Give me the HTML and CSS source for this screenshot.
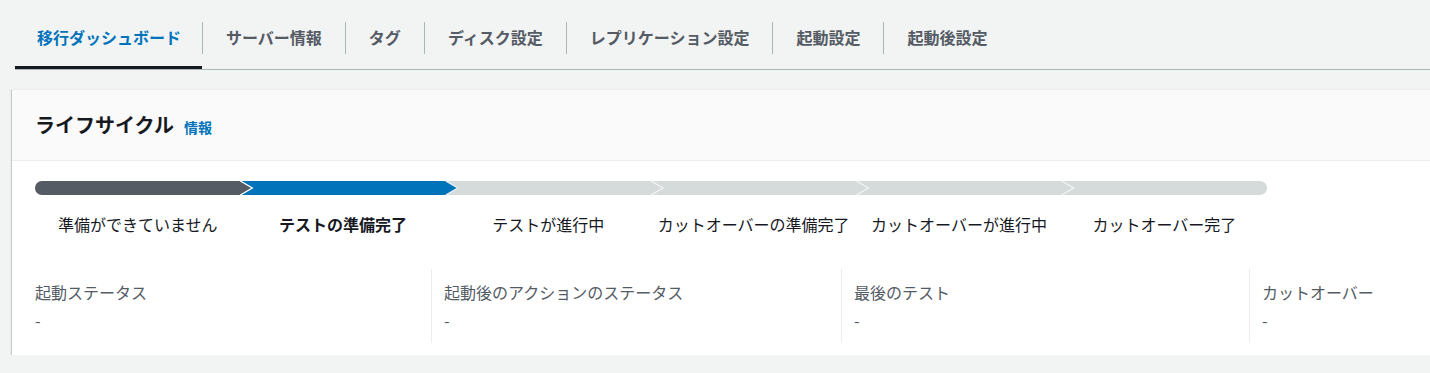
FILE: index.html
```html
<!DOCTYPE html>
<html lang="ja">
<head>
    <meta charset="UTF-8">
    <title>移行ダッシュボード</title>
    <link rel="stylesheet" href="styles.css">
</head>
<body>
    <div class="page">
        <nav class="tabs">
            <a class="tab active">移行ダッシュボード</a>
            <span class="tab-sep"></span>
            <a class="tab">サーバー情報</a>
            <span class="tab-sep"></span>
            <a class="tab">タグ</a>
            <span class="tab-sep"></span>
            <a class="tab">ディスク設定</a>
            <span class="tab-sep"></span>
            <a class="tab">レプリケーション設定</a>
            <span class="tab-sep"></span>
            <a class="tab">起動設定</a>
            <span class="tab-sep"></span>
            <a class="tab">起動後設定</a>
        </nav>

        <section class="card">
            <header class="card-header">
                <h2>ライフサイクル</h2>
                <a class="info-link">情報</a>
            </header>
            <div class="card-body">
                <div class="lifecycle">
                    <svg class="lifecycle-bar" width="1232" height="14" viewBox="0 0 1232 14">
                        <defs>
                            <clipPath id="barClip">
                                <rect x="0" y="0" width="1232" height="14" rx="7" ry="7"/>
                            </clipPath>
                        </defs>
                        <g clip-path="url(#barClip)">
                            <rect x="0" y="0" width="1232" height="14" fill="#d5dbdb"/>
                            <polygon points="0,0 205.33,0 217.33,7 205.33,14 0,14" fill="#545b64"/>
                            <polygon points="205.33,0 410.67,0 422.67,7 410.67,14 205.33,14 217.33,7" fill="#0073bb"/>
                            <g fill="none" stroke="#ffffff" stroke-width="1.3">
                                <polyline points="205.33,0 217.33,7 205.33,14"/>
                                <polyline points="410.67,0 422.67,7 410.67,14" opacity="0.8"/>
                                <polyline points="616,0 628,7 616,14" opacity="0.7"/>
                                <polyline points="821.33,0 833.33,7 821.33,14" opacity="0.7"/>
                                <polyline points="1026.67,0 1038.67,7 1026.67,14" opacity="0.7"/>
                            </g>
                        </g>
                    </svg>
                    <ol class="stages">
                        <li>準備ができていません</li>
                        <li class="current">テストの準備完了</li>
                        <li>テストが進行中</li>
                        <li>カットオーバーの準備完了</li>
                        <li>カットオーバーが進行中</li>
                        <li>カットオーバー完了</li>
                    </ol>
                </div>

                <div class="status-grid">
                    <div class="status-col">
                        <div class="status-label">起動ステータス</div>
                        <div class="status-value">-</div>
                    </div>
                    <div class="status-col">
                        <div class="status-label">起動後のアクションのステータス</div>
                        <div class="status-value">-</div>
                    </div>
                    <div class="status-col">
                        <div class="status-label">最後のテスト</div>
                        <div class="status-value">-</div>
                    </div>
                    <div class="status-col">
                        <div class="status-label">カットオーバー</div>
                        <div class="status-value">-</div>
                    </div>
                </div>
            </div>
        </section>
    </div>
</body>
</html>
```

FILE: styles.css
```css
/* Page base */
body {
    margin: 0;
    background-color: #f2f3f3;
    font-family: "Noto Sans CJK JP", "Noto Sans", Roboto, sans-serif;
    color: #16191f;
    overflow: hidden;
}

.page {
    padding-left: 12px;
    width: 1720px;
}

/* Tabs */
.tabs {
    display: flex;
    margin-left: 3px;
    border-bottom: 1px solid #aab7b8;
}

.tab {
    display: flex;
    align-items: center;
    box-sizing: border-box;
    height: 69px;
    padding: 8px 23px 0;
    border-bottom: 3px solid transparent;
    font-size: 16px;
    font-weight: bold;
    line-height: 22px;
    color: #545b64;
    white-space: nowrap;
    cursor: pointer;
}

.tab:first-child {
    padding-left: 22px;
    padding-right: 21px;
}

.tab.active {
    color: #0073bb;
    border-bottom-color: #16191f;
}

.tab-sep {
    flex-shrink: 0;
    width: 1px;
    height: 32px;
    margin-top: 22px;
    background-color: #aab7b8;
}

/* Card */
.card {
    margin-top: 19px;
    width: 1700px;
    background-color: #fff;
    border-top: 1px solid #eaeded;
    box-shadow: 0 1px 1px 0 rgba(0, 28, 36, 0.3),
                1px 1px 1px 0 rgba(0, 28, 36, 0.15),
                -1px 1px 1px 0 rgba(0, 28, 36, 0.15);
}

.card-header {
    display: flex;
    align-items: baseline;
    padding: 21px 23px;
    background-color: #fafafa;
    border-bottom: 1px solid #eaeded;
}

.card-header h2 {
    margin: 0;
    font-size: 20px;
    font-weight: bold;
    line-height: 28px;
}

.info-link {
    margin-left: 10px;
    font-size: 14px;
    font-weight: bold;
    color: #0073bb;
    cursor: pointer;
}

.card-body {
    padding: 20px 23px 12px;
}

/* Lifecycle */
.lifecycle {
    width: 1232px;
}

.lifecycle-bar {
    display: block;
}

.stages {
    display: grid;
    grid-template-columns: repeat(6, 1fr);
    margin: 19px 0 0;
    padding: 0;
    list-style: none;
}

.stages li {
    text-align: center;
    font-size: 16px;
    line-height: 20px;
    white-space: nowrap;
}

.stages li.current {
    font-weight: bold;
}

/* Status columns */
.status-grid {
    display: grid;
    grid-template-columns: 396px 410px 408px 410px;
    margin-top: 35px;
}

.status-col {
    padding: 12px 13px 12px 12px;
    border-left: 1px solid #eaeded;
}

.status-col:first-child {
    padding-left: 0;
    border-left: none;
}

.status-label {
    font-size: 16px;
    line-height: 22px;
    color: #545b64;
}

.status-value {
    margin-top: 6px;
    font-size: 16px;
    line-height: 22px;
    color: #545b64;
}
```
